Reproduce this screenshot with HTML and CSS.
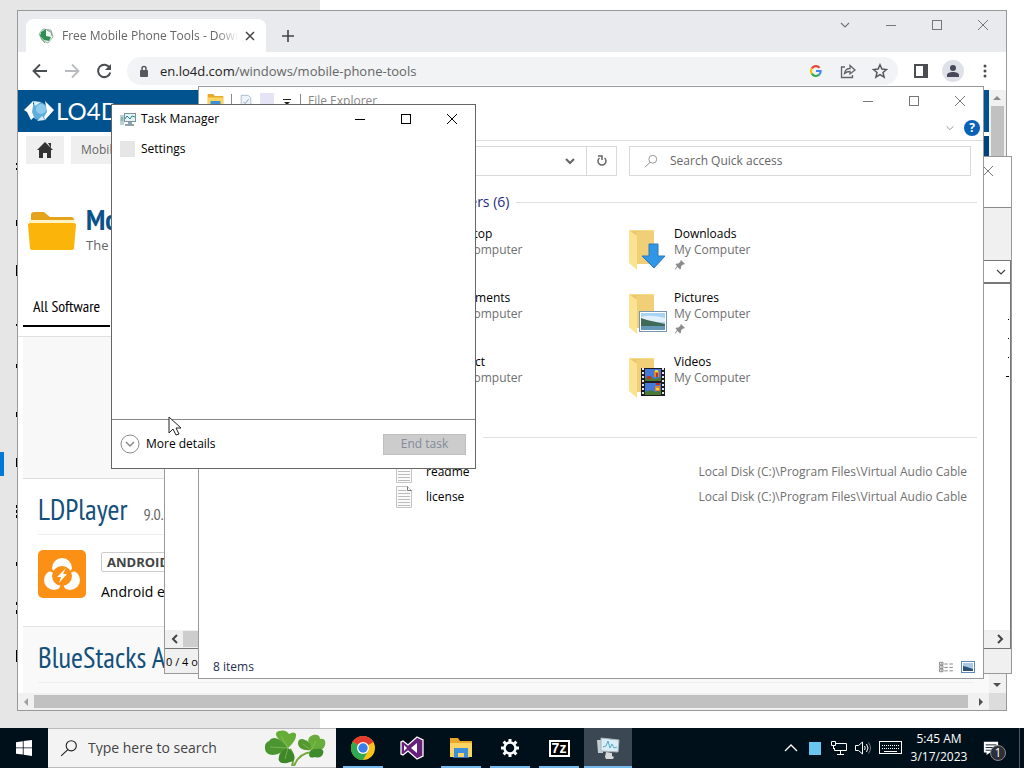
FILE: index.html
```html
<!DOCTYPE html>
<html lang="en">
<head>
<meta charset="UTF-8">
<meta name="viewport" content="width=device-width, initial-scale=1.0">
<title>Desktop</title>
<link rel="stylesheet" href="styles.css">
</head>
<body>

<!-- shared icons -->
<svg class="defs" aria-hidden="true">
    <symbol id="i-min" viewBox="0 0 12 12"><path d="M1 6.500h10" stroke="currentColor"/></symbol>
    <symbol id="i-max" viewBox="0 0 12 12"><rect x="1.500" y="1.500" width="9" height="9" fill="none" stroke="currentColor"/></symbol>
    <symbol id="i-close" viewBox="0 0 12 12"><path d="M1 1l10 10M11 1L1 11" stroke="currentColor"/></symbol>
    <symbol id="i-down" viewBox="0 0 12 12"><path d="M2 4l4 4 4-4" fill="none" stroke="currentColor" stroke-width="1.200"/></symbol>
    <symbol id="i-search" viewBox="0 0 16 16"><circle cx="10" cy="6" r="4.500" fill="none" stroke="currentColor"/><path d="M7 9.500L1 15" stroke="currentColor"/></symbol>
    <symbol id="i-folder" viewBox="0 0 40 44">
        <path d="M2 2h24v34H8z" fill="#e9c66b"/>
        <path d="M8 4l18-2v34H8z" fill="#f0cf78"/>
        <path d="M1 2l8 6v34l-8-7z" fill="#fbe391"/>
        <path d="M1 2h25v1H3z" fill="#f6dc8a"/>
    </symbol>
    <symbol id="i-pin" viewBox="0 0 12 12"><path d="M7 1l4 4-1 .5-1 0-2 2 0 2-1 1-2.500-2.500L1 11l0-1 2-3L1.500 5.500l1-1h2l2-2V1.500z" fill="#8c8c8c"/></symbol>
    <symbol id="i-file" viewBox="0 0 18 24">
        <path d="M1.500 1.500h11l4 4v17h-15z" fill="#fafafa" stroke="#c4c4c4"/>
        <path d="M12.500 1.500v4h4" fill="none" stroke="#777"/>
        <path d="M3 5.500h8M3 8.500h12M3 11.500h12M3 14.500h12M3 17.500h12M3 20.500h12" stroke="#bbb"/>
    </symbol>
    <symbol id="i-monitor" viewBox="0 0 16 16">
        <rect x="4.500" y="2.500" width="11" height="8" fill="#e4f3f5" stroke="#7d9298"/>
        <path d="M5 8l2-3 3 3 2-3 3 1" fill="none" stroke="#258a96"/>
        <path d="M0 4h4v10H0z" fill="#bcd0d8"/><path d="M1 7h2M1 9h2" stroke="#4c9e58"/>
        <path d="M8 11h4v2h2v2H5v-2h3z" fill="#8fa3ac"/>
    </symbol>
    <symbol id="i-explorer" viewBox="0 0 24 22">
        <path d="M1 1h8l2 3h12v15H1z" fill="#e9a72b"/>
        <path d="M1 6h22v14H1z" fill="#fcd462"/>
        <path d="M5 11h14v9h-4v-4H9v4H5z" fill="#3c8fd8"/>
        <path d="M4 20h16v1H4z" fill="#2a6cb0"/>
    </symbol>
</svg>

<div class="desktop">

    <!-- settings window, only its edges show -->
    <div class="settings">
        <aside class="settings-nav">
            <span class="settings-current"></span>
            <!-- menu icons peeking out beside the browser -->
            <svg class="settings-icons" viewBox="0 0 2 600" stroke="#000"><path d="M1.500 3v2M1.500 8v2M1.500 60v6M1.500 105v11M1.500 164v2M1.500 204v4M1.500 252v5M1.500 298v9M1.500 345v3M1.500 350v3M1.500 355v3M1.500 402v4M1.500 442v3M1.500 450v4M1.500 490v12"/></svg>
        </aside>
        <div class="settings-page"></div>
    </div>

    <!-- browser -->
    <section class="window browser">
        <div class="tabstrip">
            <div class="tab">
                <svg class="favicon" viewBox="0 0 16 16"><path d="M1 6l4-5 8 1 2 7-5 6-6-3z" fill="#f3f7f4" stroke="#9ab5a3"/><path d="M3 4l5-3v7l5 1-2 4-5-1-4-4z" fill="#2f8f50"/><path d="M9 2l4 2 1 4M3 10l4 5" fill="none" stroke="#7a9c85"/></svg>
                <span class="tab-title">Free Mobile Phone Tools - Download</span>
                <button class="icon-btn small" aria-label="Close tab"><svg viewBox="0 0 12 12"><path d="M2 2l8 8M10 2l-8 8" stroke="#444" stroke-width="1.500"/></svg></button>
            </div>
            <button class="icon-btn new-tab" aria-label="New tab"><svg viewBox="0 0 12 12"><path d="M6 0v12M0 6h12" stroke="#444" stroke-width="1.600"/></svg></button>
            <div class="win-controls browser-controls">
                <button aria-label="Search tabs"><svg><use href="#i-down"/></svg></button>
                <button aria-label="Minimize"><svg><use href="#i-min"/></svg></button>
                <button aria-label="Maximize"><svg><use href="#i-max"/></svg></button>
                <button aria-label="Close"><svg><use href="#i-close"/></svg></button>
            </div>
        </div>

        <div class="toolbar">
            <button class="icon-btn" aria-label="Back"><svg viewBox="0 0 16 16"><path d="M15 8H2M8 1.500L1.500 8 8 14.500" fill="none" stroke="#4a4d51" stroke-width="1.800"/></svg></button>
            <button class="icon-btn" aria-label="Forward"><svg viewBox="0 0 16 16"><path d="M1 8h13M8 1.500L14.500 8 8 14.500" fill="none" stroke="#b9bbbe" stroke-width="1.800"/></svg></button>
            <button class="icon-btn" aria-label="Reload"><svg viewBox="0 0 16 16"><path d="M13.500 4.500A6.200 6.200 0 1 0 14.300 9.500" fill="none" stroke="#4a4d51" stroke-width="2"/><path d="M15 1v6H9z" fill="#4a4d51"/></svg></button>
            <div class="omnibox">
                <svg class="lock" viewBox="0 0 10 13"><rect x="1" y="5" width="8" height="7" rx="1" fill="#55585c"/><path d="M3 5V3.500a2 2 0 0 1 4 0V5" fill="none" stroke="#55585c" stroke-width="1.500"/></svg>
                <a class="url" href="#"><b>en.lo4d.com</b>/windows/mobile-phone-tools</a>
                <button class="icon-btn google" aria-label="Google"><svg viewBox="0 0 16 16" fill="none" stroke-width="2.400"><path d="M3.300 5A5.300 5.300 0 0 1 12 4.500" stroke="#ea4335"/><path d="M3.300 5a5.300 5.300 0 0 0 0 6" stroke="#fbbc05"/><path d="M3.300 11a5.300 5.300 0 0 0 8.500 1" stroke="#34a853"/><path d="M11.800 12A5.300 5.300 0 0 0 13.300 8H8" stroke="#4285f4"/></svg></button>
                <button class="icon-btn" aria-label="Share"><svg viewBox="0 0 16 16" fill="none" stroke="#5f6368" stroke-width="1.300"><path d="M5 4H1.500v10.500h11V12"/><path d="M4.500 10.500C5 7 7 5.500 10 5.500V2.500L15 7l-5 4V8.500c-2.500 0-4 .5-5.500 2z"/></svg></button>
                <button class="icon-btn" aria-label="Bookmark"><svg viewBox="0 0 16 16"><path d="M8 1.800l1.900 4.300 4.600.4-3.500 3 1.100 4.600L8 11.600l-4.100 2.500L5 9.500l-3.500-3 4.600-.4z" fill="none" stroke="#55585c" stroke-width="1.500"/></svg></button>
            </div>
            <button class="icon-btn" aria-label="Side panel"><svg viewBox="0 0 16 16"><rect x="2" y="2" width="12" height="12" fill="none" stroke="#4a4d51" stroke-width="2"/><path d="M10 2h5v12h-5z" fill="#4a4d51"/></svg></button>
            <button class="icon-btn avatar" aria-label="Profile"><svg viewBox="0 0 16 16" fill="#46495a"><circle cx="8" cy="5" r="3"/><path d="M2 14v-2c0-2 3-3 6-3s6 1 6 3v2z"/></svg></button>
            <button class="icon-btn dots" aria-label="Menu"><svg viewBox="0 0 16 16" fill="#4a4d51"><circle cx="8" cy="3" r="1.500"/><circle cx="8" cy="8" r="1.500"/><circle cx="8" cy="13" r="1.500"/></svg></button>
        </div>

        <div class="viewport">
            <div class="page">
                <header class="site-header">
                    <svg class="site-mark" viewBox="0 0 30 22"><circle cx="15" cy="11" r="9" fill="#5eafdb"/><circle cx="17" cy="9" r="5" fill="#8ccbeb"/><path d="M9 1L0 10l3 2 4 8 3-3-2-5 1-6zM21 1l9 9-9 10-1-3 3-5-1-6z" fill="#fff"/><path d="M9 1l8 1-6 4zM13 21l8-1-3-4z" fill="#d7ecf7"/></svg>
                    <span class="site-name">LO4D</span>
                </header>
                <nav class="crumbs">
                    <a class="crumb home" href="#" aria-label="Home"><svg viewBox="0 0 16 16"><path d="M8 0l8 8h-2v8h-4v-5H6v5H2V8H0zM11 1h3v5z" fill="#333"/></svg></a>
                    <a class="crumb" href="#">Mobile</a>
                    <span class="crumb-end"></span>
                </nav>
                <div class="category">
                    <svg class="category-icon" viewBox="0 0 48 40"><path d="M3 12V4q0-3 3-3h10l6 5h21q3 0 3 3v4z" fill="#e5a31b"/><path d="M1 9h46v4H1z" fill="#fff3c4"/><path d="M0 14q0-2 3-2h42q3 0 3 2l-2 23q0 2-3 2H5q-3 0-3-2z" fill="#fbb40a"/></svg>
                    <div>
                        <h1>Mobile</h1>
                        <p>The best</p>
                    </div>
                </div>
                <div class="page-tabs"><a href="#">All Software</a></div>
                <div class="banner"></div>
                <article class="app">
                    <div class="app-head"><h2>LDPlayer</h2><span>9.0.41</span></div>
                    <div class="app-body">
                        <svg class="app-icon" viewBox="0 0 48 48"><rect width="48" height="48" rx="5" fill="#fb9015"/><circle cx="24" cy="18" r="10" fill="#fff"/><circle cx="16" cy="30" r="10" fill="#fff"/><circle cx="32" cy="30" r="10" fill="#fff"/><circle cx="24" cy="26" r="10" fill="#fb9015"/><path d="M24 32l-4 9h8zM14 19l4 4-8-2zM34 19l-4 4 8-2z" fill="#fb9015"/><path d="M28 18l-9 9h4l-2 6 8-9h-4z" fill="#fff"/></svg>
                        <div>
                            <span class="tag">ANDROID</span>
                            <p>Android emulator</p>
                        </div>
                    </div>
                </article>
                <article class="app alt">
                    <div class="app-head"><h2>BlueStacks App</h2></div>
                </article>
            </div>
            <div class="vscroll">
                <svg viewBox="0 0 16 16"><path d="M4 10l4-4 4 4z" fill="#8a8a8a"/></svg>
                <span class="thumb"></span>
                <svg viewBox="0 0 16 16"><path d="M4 6l4 4 4-4z" fill="#505050"/></svg>
            </div>
        </div>
        <div class="hscroll">
            <svg viewBox="0 0 16 16"><path d="M10 4L6 8l4 4z" fill="#a0a0a0"/></svg>
            <span class="thumb"></span>
            <svg viewBox="0 0 16 16"><path d="M6 4l4 4-4 4z" fill="#505050"/></svg>
            <span class="corner"></span>
        </div>
    </section>

    <!-- archive manager -->
    <section class="window archiver">
        <div class="arc-title">
            <button class="icon-btn" aria-label="Close"><svg><use href="#i-close"/></svg></button>
        </div>
        <div class="arc-tools"></div>
        <div class="arc-path"><svg><use href="#i-down"/></svg></div>
        <div class="arc-list">
            <svg viewBox="0 0 4 60" stroke="#000"><path d="M2 1.500h1M2 20.500h1M2 39.500h1M0 58.500h3"/></svg>
        </div>
        <div class="arc-scroll">
            <svg viewBox="0 0 16 16"><path d="M10 4L6 8l4 4" fill="none" stroke="#444" stroke-width="2"/></svg>
            <span class="thumb"></span>
            <svg viewBox="0 0 16 16"><path d="M6 4l4 4-4 4" fill="none" stroke="#444" stroke-width="2"/></svg>
        </div>
        <div class="arc-status">0 / 4 object(s) selected</div>
    </section>

    <!-- file explorer -->
    <section class="window explorer">
        <div class="ex-title">
            <svg class="ex-logo"><use href="#i-explorer"/></svg>
            <span class="sep"></span>
            <svg class="qa" viewBox="0 0 16 16"><path d="M2.500 1.500h8l3 3v10h-11z" fill="#eef3fa" stroke="#a9b7c9"/><path d="M5 9l2 2 4-5" fill="none" stroke="#8796ab"/></svg>
            <span class="qa blank"></span>
            <svg class="qa-more" viewBox="0 0 12 12"><path d="M2 4.500h8" stroke="#222"/><path d="M3 7h6L6 10z" fill="#222"/></svg>
            <span class="sep"></span>
            <span>File Explorer</span>
            <div class="win-controls">
                <button aria-label="Minimize"><svg><use href="#i-min"/></svg></button>
                <button aria-label="Maximize"><svg><use href="#i-max"/></svg></button>
                <button aria-label="Close"><svg><use href="#i-close"/></svg></button>
            </div>
        </div>
        <div class="ex-ribbon">
            <svg><use href="#i-down"/></svg>
            <button class="help" aria-label="Help">?</button>
        </div>
        <div class="ex-bar">
            <div class="ex-address">
                <button class="icon-btn" aria-label="Previous locations"><svg viewBox="0 0 12 12"><path d="M2 4l4 4 4-4" fill="none" stroke="#666" stroke-width="2"/></svg></button>
                <button class="icon-btn refresh" aria-label="Refresh"><svg viewBox="0 0 12 12"><path d="M8.500 3A4 4 0 1 1 3.500 3" fill="none" stroke="#666" stroke-width="1.500"/><path d="M2 1h4v4" fill="none" stroke="#666" stroke-width="1.500"/></svg></button>
            </div>
            <label class="ex-search">
                <svg><use href="#i-search"/></svg>
                <input type="text" placeholder="Search Quick access" aria-label="Search Quick access">
            </label>
        </div>
        <div class="ex-main">
            <h3 class="group">Frequent folders (6)</h3>
            <div class="folders">
                <div class="folder"><svg class="folder-icon"><use href="#i-folder"/></svg><div><b>Desktop</b><span>My Computer</span></div></div>
                <div class="folder">
                    <svg class="folder-icon" viewBox="0 0 40 44"><use href="#i-folder" width="40" height="44"/><path d="M21 16h9v12h7L26 40 14 28h7z" fill="#3296e6" stroke="#2a78c0"/></svg>
                    <div><b>Downloads</b><span>My Computer</span><svg class="pin"><use href="#i-pin"/></svg></div>
                </div>
                <div class="folder"><svg class="folder-icon"><use href="#i-folder"/></svg><div><b>Documents</b><span>My Computer</span></div></div>
                <div class="folder">
                    <svg class="folder-icon" viewBox="0 0 40 44"><use href="#i-folder" width="40" height="44"/><rect x="11.500" y="19.500" width="27" height="20" fill="#fff" stroke="#7793b3"/><path d="M13 21h24v17H13z" fill="#a9d3f3"/><path d="M13 25q10-3 24 1v4H13z" fill="#dff0fa"/><path d="M13 26l6 2 18 4v2H13z" fill="#3e6b58"/><path d="M13 34h24v4H13z" fill="#6597b8"/></svg>
                    <div><b>Pictures</b><span>My Computer</span><svg class="pin"><use href="#i-pin"/></svg></div>
                </div>
                <div class="folder"><svg class="folder-icon"><use href="#i-folder"/></svg><div><b>Project</b><span>My Computer</span></div></div>
                <div class="folder">
                    <svg class="folder-icon" viewBox="0 0 40 44"><use href="#i-folder" width="40" height="44"/><path d="M13 12h24v28H13z" fill="#1c1c22"/><path d="M15 12v28M35 12v28" stroke="#e8e8e8" stroke-width="2" stroke-dasharray="2 2"/><path d="M17 13h16v12H17zM17 27h16v12H17z" fill="#4479d8"/><path d="M17 22l5-2 4 3 7-2v4H17zM17 36l6-2 4 2 6-2v5H17z" fill="#4c7a35"/><path d="M26 15h5v6h-5zM27 30h5v5h-5z" fill="#e2852a"/><path d="M19 20h4v3h-4zM28 17h2v4h-2zM28 27h4v2h-4z" fill="#b5352a"/><path d="M27 14h3v2h-3zM28 32h3v2h-3z" fill="#f4d13d"/></svg>
                    <div><b>Videos</b><span>My Computer</span></div>
                </div>
            </div>
            <h3 class="group recent">Recent files (2)</h3>
            <div class="file"><svg><use href="#i-file"/></svg><b>readme</b><span>Local Disk (C:)\Program Files\Virtual Audio Cable</span></div>
            <div class="file"><svg><use href="#i-file"/></svg><b>license</b><span>Local Disk (C:)\Program Files\Virtual Audio Cable</span></div>
        </div>
        <div class="ex-status">
            <span>8 items</span>
            <button class="icon-btn" aria-label="Details"><svg viewBox="0 0 16 14" fill="none" stroke="#777"><path d="M.5 1.500h4v3h-4zM.5 5.500h4v3h-4zM.5 9.500h4v3h-4zM2 3h1M2 7h1M2 11h1"/><path d="M6 3.500h10M6 7.500h10M6 11.500h10" stroke-dasharray="4 2"/></svg></button>
            <button class="icon-btn" aria-label="Large icons"><svg viewBox="0 0 14 12"><rect x=".5" y=".5" width="13" height="11" fill="#fff" stroke="#5f87b5"/><path d="M2 2h10v8H2z" fill="#a9c8e2"/><path d="M2 5l4 1 6 2v2H2z" fill="#2e4f74"/></svg></button>
        </div>
    </section>

    <!-- task manager -->
    <section class="window taskmgr">
        <div class="tm-title">
            <svg class="tm-logo"><use href="#i-monitor"/></svg>
            <span>Task Manager</span>
            <div class="win-controls">
                <button aria-label="Minimize"><svg><use href="#i-min"/></svg></button>
                <button aria-label="Maximize"><svg><use href="#i-max"/></svg></button>
                <button aria-label="Close"><svg><use href="#i-close"/></svg></button>
            </div>
        </div>
        <ul class="tm-list">
            <li><span class="app-blank"></span>Settings</li>
        </ul>
        <div class="tm-footer">
            <button class="more"><svg viewBox="0 0 20 20" fill="none" stroke="#8a8a8a"><circle cx="10" cy="10" r="9"/><path d="M6 8l4 4 4-4" stroke-width="1.500"/></svg>More details</button>
            <button class="end" disabled>End task</button>
        </div>
    </section>

    <svg class="cursor" viewBox="0 0 14 21"><path d="M1 1v16l4-4 3 6 3-1-3-6h5z" fill="#fff" stroke="#222"/></svg>
</div>

<footer class="taskbar">
    <button class="start" aria-label="Start"><svg viewBox="0 0 16 16"><path d="M0 2.200L6.800 1.200v6.300H0zM7.600 1.100L16 0v7.500H7.600zM0 8.300h6.800v6.300L0 13.700zM7.600 8.300H16V16l-8.400-1.200z" fill="#fff"/></svg></button>
    <label class="tb-search">
        <svg class="tb-glass"><use href="#i-search"/></svg>
        <input type="text" placeholder="Type here to search" aria-label="Type here to search">
        <svg class="clover" viewBox="0 0 62 36">
            <path d="M26 19q5 6 2 17M48 22q-13 1-18 14" fill="none" stroke="#76a83a" stroke-width="2"/>
            <path d="M24 18C12 8 9 3 15 1q7-2 10 3 5-3 7 0 1 6-8 14z" fill="#65ad36"/>
            <path d="M24 18C12 28 2 26 1 19q-1-6 4-8 3-5 9-2 4 2 10 9z" fill="#4c9530"/>
            <path d="M24 18c9 7 8 13 2 14-7 3-13 0-11-5 0-4 4-7 9-9z" fill="#3e8729"/>
            <path d="M47 20c-4-8-4-13 2-15 5-1 7 1 7 4 5-1 6 3 5 6-1 5-7 7-14 5z" fill="#68ad3c"/>
            <path d="M47 20c-8 1-13-2-13-7 0-4 4-5 7-3 4 1 6 5 6 10z" fill="#54992f"/>
            <path d="M47 20c8-2 14-2 12 4-2 4-5 4-8 3-5 2-8-1-4-7z" fill="#3f8b2c"/>
            <path d="M24 18L17 6M24 18L6 17M24 18l-3 11M47 20l5-9M47 20l-8-6" stroke="#96c862" stroke-width=".6"/>
        </svg>
    </label>
    <nav class="pins">
        <button class="open" aria-label="Chrome"><svg viewBox="0 0 24 24"><circle cx="12" cy="12" r="12" fill="#fbc116"/><path d="M12 12L1.600 6a12 12 0 0 1 20.800 0z" fill="#e33b2e"/><path d="M12 12L1.600 6A12 12 0 0 0 12 24l5-9z" fill="#2da94f"/><circle cx="12" cy="12" r="6" fill="#fff"/><circle cx="12" cy="12" r="4.700" fill="#3b7de9"/></svg></button>
        <button aria-label="Visual Studio"><svg viewBox="0 0 24 24"><path d="M17 1l6 3v16l-6 3-9-8-5 4-2-1V6l2-1 5 4z" fill="#68217a" stroke="#fff" stroke-width="1.300"/><path d="M17 7v10l-6-5zM4 9v6l3-3z" fill="#fff"/></svg></button>
        <button class="open" aria-label="File Explorer"><svg><use href="#i-explorer"/></svg></button>
        <button class="open" aria-label="Settings"><svg viewBox="0 0 24 24" fill="none" stroke="#fff"><circle cx="12" cy="12" r="5.500" stroke-width="2.500"/><path d="M12 3v3M12 18v3M3 12h3M18 12h3M5.600 5.600l2.200 2.200M16.200 16.200l2.200 2.200M5.600 18.400l2.200-2.200M16.200 7.800l2.200-2.200" stroke-width="3"/></svg></button>
        <button class="open" aria-label="7-Zip"><span class="sevenzip">7z</span></button>
        <button class="open active" aria-label="Task Manager"><svg viewBox="0 0 24 24"><path d="M1 4h6v13H2z" fill="#c3ccd0"/><path d="M5 2l18 2-1 12-17-1z" fill="#d8edf5" stroke="#aab4b9"/><path d="M7 11l3-1 2-5 2 7 2-4 2 4 3-1" fill="none" stroke="#5aa9c6"/><path d="M10 16l6 1v3l2 1-1 2h-7l-1-2z" fill="#d5d9da"/></svg></button>
    </nav>
    <div class="tray">
        <svg viewBox="0 0 16 16"><path d="M2 11l6-6 6 6" fill="none" stroke="#fff" stroke-width="1.300"/></svg>
        <span class="swatch"></span>
        <svg viewBox="0 0 16 16" fill="none" stroke="#fff"><path d="M5 3.500h10.500v7H3.500V8M9.500 11v3M6 14.500h7M.5 1.500h4v4h-4zM2.500 6v3"/></svg>
        <svg viewBox="0 0 16 16" fill="none" stroke="#fff"><path d="M.5 5.500h3l4-3.500v12l-4-3.500h-3zM9.500 6q1.500 2 0 4M11.500 4q3 4 0 8"/><path d="M13.500 2.500q4 5.500 0 11" stroke="#778"/></svg>
        <svg class="keyboard" viewBox="0 0 24 14" fill="none" stroke="#fff"><rect x=".5" y=".5" width="22" height="12"/><path d="M3 4.500h18M3 7.500h18" stroke-dasharray="1 1"/><path d="M5 10.500h13"/></svg>
        <div class="clock"><span>5:45 AM</span><span>3/17/2023</span></div>
        <button class="notify" aria-label="Notifications"><svg viewBox="0 0 18 16"><path d="M1 1h16v12H8l-4 3v-3H1z" fill="#fff"/><path d="M3 4.500h12M3 7.500h12M3 10.500h8" stroke="#00101a"/></svg><span class="badge">1</span></button>
        <span class="show-desktop"></span>
    </div>
</footer>

</body>
</html>
```
FILE: styles.css
```css
* {
    box-sizing: border-box;
}

body {
    margin: 0;
    height: 100vh;
    display: flex;
    flex-direction: column;
    overflow: hidden;
    font-family: "Segoe UI", "Open Sans", "Noto Sans", sans-serif;
    font-size: 12px;
    line-height: 16px;
    color: #000;
    background: #fff;
}

h1, h2, h3, p, ul {
    margin: 0;
    padding: 0;
    font-weight: normal;
}

b {
    font-weight: normal;
}

a {
    color: inherit;
    text-decoration: none;
}

button {
    padding: 0;
    border: 0;
    background: none;
    font: inherit;
    color: inherit;
}

input {
    min-width: 0;
    padding: 0;
    border: 0;
    outline: 0;
    background: none;
    font: inherit;
}

svg {
    display: block;
    flex: none;
}

.defs {
    position: absolute;
    width: 0;
    height: 0;
}

.desktop {
    position: relative;
    flex: 1;
    min-height: 0;
}

/* windows */
.window {
    position: absolute;
    display: flex;
    flex-direction: column;
    overflow: hidden;
    background: #fff;
    border: 1px solid #999;
}

.win-controls {
    display: flex;
    margin-left: auto;
    color: #777;
}

.win-controls button {
    width: 46px;
    height: 28px;
    display: flex;
    align-items: center;
    justify-content: center;
}

.win-controls svg {
    width: 12px;
    height: 12px;
}

.icon-btn {
    flex: none;
    width: 32px;
    height: 28px;
    display: flex;
    align-items: center;
    justify-content: center;
}

.icon-btn svg {
    width: 16px;
    height: 16px;
}

.thumb {
    background: #c1c1c1;
}

/* settings */
.settings {
    height: 100%;
    display: flex;
}

.settings-nav {
    position: relative;
    width: 320px;
    padding-top: 452px;
    background: #e6e6e6;
}

.settings-current {
    display: block;
    width: 4px;
    height: 24px;
    background: #0078d7;
}

.settings-icons {
    position: absolute;
    top: 160px;
    left: 15px;
    width: 2px;
    height: 600px;
}

/* browser */
.browser {
    top: 10px;
    right: 17px;
    bottom: 17px;
    left: 17px;
}

.tabstrip {
    flex: none;
    height: 41px;
    display: flex;
    align-items: flex-start;
    padding-left: 8px;
    background: #e8eaed;
}

.tab {
    width: 240px;
    height: 34px;
    margin-top: 8px;
    display: flex;
    align-items: center;
    padding: 0 4px 0 12px;
    background: #fff;
    border-radius: 8px 8px 0 0;
    color: #666;
}

.favicon {
    width: 16px;
    height: 16px;
    margin-right: 8px;
}

.tab-title {
    flex: 1;
    overflow: hidden;
    white-space: nowrap;
    -webkit-mask-image: linear-gradient(to right, #000 88%, transparent);
    mask-image: linear-gradient(to right, #000 88%, transparent);
}

.icon-btn.small {
    width: 24px;
}

.small svg,
.new-tab svg {
    width: 12px;
    height: 12px;
}

.new-tab {
    margin: 11px 0 0 6px;
}

.toolbar {
    flex: none;
    height: 38px;
    display: flex;
    align-items: center;
    padding: 0 6px;
}

.omnibox {
    flex: 1;
    height: 28px;
    margin: 0 7px;
    padding: 0 2px 0 12px;
    display: flex;
    align-items: center;
    border-radius: 14px;
    background: #f1f3f4;
}

.lock {
    width: 10px;
    height: 13px;
    margin-right: 11px;
}

.url {
    flex: 1;
    font-size: 13px;
    color: #666;
}

.url b {
    color: #222;
}

.google svg {
    width: 14px;
    height: 14px;
}

.avatar {
    height: 22px;
    width: 22px;
    margin: 0 6px 0 5px;
    border-radius: 11px;
    background: #dfe1e8;
}

.icon-btn.dots {
    width: 30px;
}

.viewport {
    flex: 1;
    min-height: 0;
    display: flex;
}

.page {
    flex: 1;
    overflow: hidden;
    white-space: nowrap;
}

.site-header {
    height: 42px;
    display: flex;
    align-items: center;
    padding-left: 6px;
    background: #00538f;
}

.site-mark {
    width: 30px;
    height: 22px;
    margin-right: 2px;
}

.site-name {
    font: 24px/30px Lato, sans-serif;
    color: #fff;
}

.crumbs {
    height: 79px;
    display: flex;
    gap: 7px;
    padding: 4px 0 0 8px;
    align-items: flex-start;
}

.crumb {
    height: 28px;
    padding: 6px 10px;
    background: #efefef;
    color: #666;
}

.home {
    width: 38px;
}

.home svg {
    width: 18px;
    height: 16px;
}

.crumb-end {
    width: 8px;
    height: 28px;
    margin-left: auto;
    background: #00437a;
}

.category {
    height: 73px;
    display: flex;
    gap: 10px;
    padding-left: 10px;
}

.category-icon {
    width: 48px;
    height: 40px;
}

/* narrow display face of the download site */
h1, h2, .page-tabs, .app-head {
    font-family: "PT Sans Narrow", "Open Sans Condensed", "Roboto Condensed", Roboto, sans-serif;
}

h1 {
    margin-top: -8px;
    font-size: 29px;
    line-height: 32px;
    font-weight: bold;
    color: #0a5289;
}

.category p {
    font-size: 13px;
    line-height: 20px;
    color: #666;
}

.page-tabs {
    height: 53px;
    padding: 0 5px;
    border-bottom: 1px solid #e0e0e0;
    font-size: 16px;
}

.page-tabs a {
    display: inline-block;
    height: 43px;
    padding: 12px 10px 0;
    line-height: 20px;
    border-bottom: 2px solid #000;
}

.banner {
    height: 142px;
    margin-left: 5px;
    border-bottom: 1px solid #ddd;
    background: #f8f8f8;
}

.app {
    margin-left: 5px;
    padding: 0 15px;
    height: 148px;
    border-bottom: 1px solid #e2e2e2;
}

.app.alt {
    background: #f9f9f9;
}

.app-head {
    height: 56px;
    display: flex;
    align-items: baseline;
    gap: 16px;
    padding-top: 12px;
    border-bottom: 1px solid #eee;
    color: #666;
    font-size: 16px;
}

h2 {
    font-size: 29px;
    line-height: 36px;
    color: #14507c;
}

.app-body {
    display: flex;
    gap: 15px;
    padding-top: 15px;
}

.app-icon {
    width: 48px;
    height: 48px;
}

.tag {
    display: inline-block;
    margin-top: 2px;
    padding: 0 5px;
    border: 1px solid #ccc;
    border-radius: 2px;
    font-size: 13px;
    line-height: 18px;
    font-weight: bold;
    color: #444;
}

.app-body p {
    margin-top: 12px;
    font-size: 14px;
}

.vscroll {
    width: 17px;
    display: flex;
    flex-direction: column;
    background: #f1f1f1;
}

.vscroll .thumb {
    flex: 1;
    margin: 0 2px 180px;
}

.vscroll svg,
.hscroll svg,
.arc-scroll svg {
    width: 16px;
    height: 16px;
}

.hscroll {
    flex: none;
    height: 17px;
    display: flex;
    align-items: center;
    background: #f1f1f1;
}

.hscroll .thumb {
    flex: 1;
    height: 13px;
    margin-right: 5px;
}

.hscroll .corner {
    width: 17px;
    height: 17px;
    background: #dcdcdc;
}

/* archive manager */
.archiver {
    top: 156px;
    right: 12px;
    bottom: 54px;
    left: 164px;
}

.arc-title {
    height: 51px;
    display: flex;
    justify-content: flex-end;
    padding-right: 7px;
    color: #777;
    border-bottom: 1px solid #888;
}

.arc-title svg {
    width: 12px;
    height: 12px;
}

.arc-tools {
    height: 52px;
    background: #f0f0f0;
}

.arc-path {
    height: 24px;
    display: flex;
    align-items: center;
    justify-content: flex-end;
    padding-right: 2px;
    border: 1px solid #777;
    border-bottom-width: 2px;
    color: #444;
}

.arc-path svg {
    width: 14px;
    height: 12px;
}

.arc-list {
    flex: 1;
    display: flex;
    justify-content: flex-end;
    padding-top: 34px;
    border-right: 1px solid #777;
}

.arc-list svg {
    width: 4px;
    height: 60px;
}

.arc-scroll {
    height: 19px;
    display: flex;
    align-items: center;
    padding: 0 2px;
    background: #f0f0f0;
    border: solid #777;
    border-width: 0 1px 1px 0;
}

.arc-scroll .thumb {
    flex: 1;
    height: 16px;
    margin-right: 20px;
    background: #cdcdcd;
}

.arc-status {
    height: 24px;
    padding: 5px 1px;
    font-size: 11px;
    background: #f0f0f0;
}

/* file explorer */
.explorer {
    top: 86px;
    right: 40px;
    bottom: 49px;
    left: 198px;
}

.ex-title {
    height: 28px;
    display: flex;
    align-items: center;
    gap: 7px;
    padding-left: 8px;
    color: #888;
}

.ex-logo {
    width: 17px;
    height: 16px;
}

.sep {
    width: 1px;
    height: 14px;
    background: #888;
}

.qa {
    width: 14px;
    height: 16px;
}

.qa.blank {
    background: #e4e4f4;
}

.qa-more {
    width: 12px;
    height: 12px;
}

.ex-ribbon {
    height: 26px;
    display: flex;
    align-items: center;
    justify-content: flex-end;
    gap: 9px;
    padding-right: 3px;
    border-bottom: 1px solid #ddd;
    color: #999;
}

.ex-ribbon svg {
    width: 10px;
    height: 10px;
}

.help {
    width: 16px;
    height: 16px;
    border-radius: 8px;
    background: #0a62b8;
    color: #fff;
    font-weight: bold;
}

.ex-bar {
    display: flex;
    gap: 12px;
    padding: 5px 12px 0 10px;
}

.ex-address,
.ex-search {
    height: 30px;
    display: flex;
    align-items: center;
    border: 1px solid #d9d9d9;
}

.ex-address {
    flex: 1;
    justify-content: flex-end;
}

.ex-address svg {
    width: 12px;
    height: 12px;
}

.ex-address .refresh {
    width: 30px;
    border-left: 1px solid #d9d9d9;
}

.ex-search {
    width: 342px;
    gap: 12px;
    padding-left: 14px;
    color: #888;
}

.ex-search svg {
    width: 14px;
    height: 14px;
}

.ex-search input {
    flex: 1;
}

.ex-search input::placeholder {
    color: #666;
    opacity: 1;
}

.ex-main {
    flex: 1;
    padding: 16px 6px 0 182px;
}

.group {
    display: flex;
    align-items: center;
    gap: 7px;
    font-size: 14px;
    line-height: 20px;
    color: #1e2a86;
}

.group::after {
    content: "";
    flex: 1;
    height: 1px;
    background: #ddd;
}

.folders {
    display: grid;
    grid-template-columns: 228px 1fr;
    grid-auto-rows: 64px;
    padding: 14px 0 0 19px;
}

.folder {
    display: flex;
    gap: 6px;
}

.folder b,
.folder span {
    display: block;
}

.folder span,
.file span {
    color: #707070;
}

.folder-icon {
    width: 40px;
    height: 44px;
    margin-top: 2px;
}

.pin {
    width: 12px;
    height: 12px;
    margin-top: 1px;
}

.group.recent {
    margin: 9px 0 12px;
}

.file {
    height: 25px;
    display: flex;
    align-items: center;
    padding: 0 10px 0 14px;
}

.file svg {
    width: 18px;
    height: 24px;
    margin-right: 13px;
}

.file span {
    margin-left: auto;
}

.ex-status {
    height: 24px;
    display: flex;
    align-items: center;
    padding: 2px 4px 0 14px;
    color: #1e3050;
}

.ex-status span {
    flex: 1;
}

.ex-status .icon-btn {
    width: 22px;
    height: 20px;
}

.ex-status svg {
    height: 12px;
}

/* task manager */
.taskmgr {
    top: 104px;
    left: 111px;
    width: 365px;
    height: 365px;
    border-color: #666;
}

.tm-title {
    display: flex;
    align-items: center;
    gap: 5px;
    padding-left: 8px;
}

.tm-title .win-controls {
    color: #000;
}

.tm-logo {
    width: 16px;
    height: 16px;
}

.tm-list {
    flex: 1;
    padding: 8px;
    list-style: none;
}

.tm-list li {
    display: flex;
    align-items: center;
    gap: 6px;
}

.app-blank {
    width: 15px;
    height: 16px;
    background: #e6e6e6;
}

.tm-footer {
    height: 49px;
    display: flex;
    align-items: center;
    justify-content: space-between;
    padding: 0 9px 0 8px;
    border-top: 1px solid #888;
}

.more {
    display: flex;
    align-items: center;
    gap: 6px;
}

.more svg {
    width: 20px;
    height: 20px;
}

.end {
    width: 83px;
    height: 21px;
    border: 1px solid #bfbfbf;
    background: #ccc;
    color: #838b98;
}

.cursor {
    position: absolute;
    top: 416px;
    left: 168px;
    width: 14px;
    height: 21px;
}

/* taskbar */
.taskbar {
    flex: none;
    height: 40px;
    display: flex;
    background: #00101a;
    color: #fff;
}

.start {
    width: 48px;
    display: flex;
    align-items: center;
    justify-content: center;
}

.start svg {
    width: 16px;
    height: 16px;
}

.tb-search {
    width: 288px;
    display: flex;
    align-items: center;
    padding: 0 10px 0 12px;
    background: #f3f3f3;
    border: solid #bbb;
    border-width: 1px 0;
}

.tb-glass {
    width: 18px;
    height: 18px;
    margin-right: 10px;
    color: #222;
}

.tb-search input {
    flex: 1;
    font-size: 14px;
}

.tb-search input::placeholder {
    color: #444;
    opacity: 1;
}

.clover {
    width: 62px;
    height: 36px;
}

.pins {
    display: flex;
    gap: 1px;
    padding-left: 3px;
}

.pins button {
    width: 48px;
    display: flex;
    align-items: center;
    justify-content: center;
    border-bottom: 2px solid transparent;
    padding-top: 2px;
}

.pins svg {
    width: 24px;
    height: 24px;
}

.pins .open {
    background: linear-gradient(#76b9ed, #76b9ed) center bottom / 40px 2px no-repeat border-box;
}

.pins .active {
    background: #3b4853;
    border-bottom-color: #76b9ed;
}

.sevenzip {
    width: 21px;
    height: 17px;
    border: 2px solid #fff;
    background: #000;
    font: bold 14px/13px "Liberation Sans", sans-serif;
}

.tray {
    margin-left: auto;
    display: flex;
    align-items: center;
    gap: 8px;
}

.tray svg {
    width: 16px;
    height: 16px;
}

.swatch {
    width: 12px;
    height: 13px;
    margin: 0 2px;
    background: #69c5ef;
}

.tray .keyboard {
    width: 24px;
    height: 14px;
}

.clock {
    width: 56px;
    display: flex;
    flex-direction: column;
    align-items: center;
    line-height: 18px;
}

.notify {
    position: relative;
    margin-left: 8px;
}

.badge {
    position: absolute;
    top: 5px;
    left: 7px;
    width: 16px;
    height: 16px;
    border: 1px solid #888;
    border-radius: 8px;
    background: #2b2f38;
    line-height: 14px;
}

.show-desktop {
    width: 5px;
    height: 40px;
    margin-left: 12px;
    border-left: 1px solid #555;
}
```
